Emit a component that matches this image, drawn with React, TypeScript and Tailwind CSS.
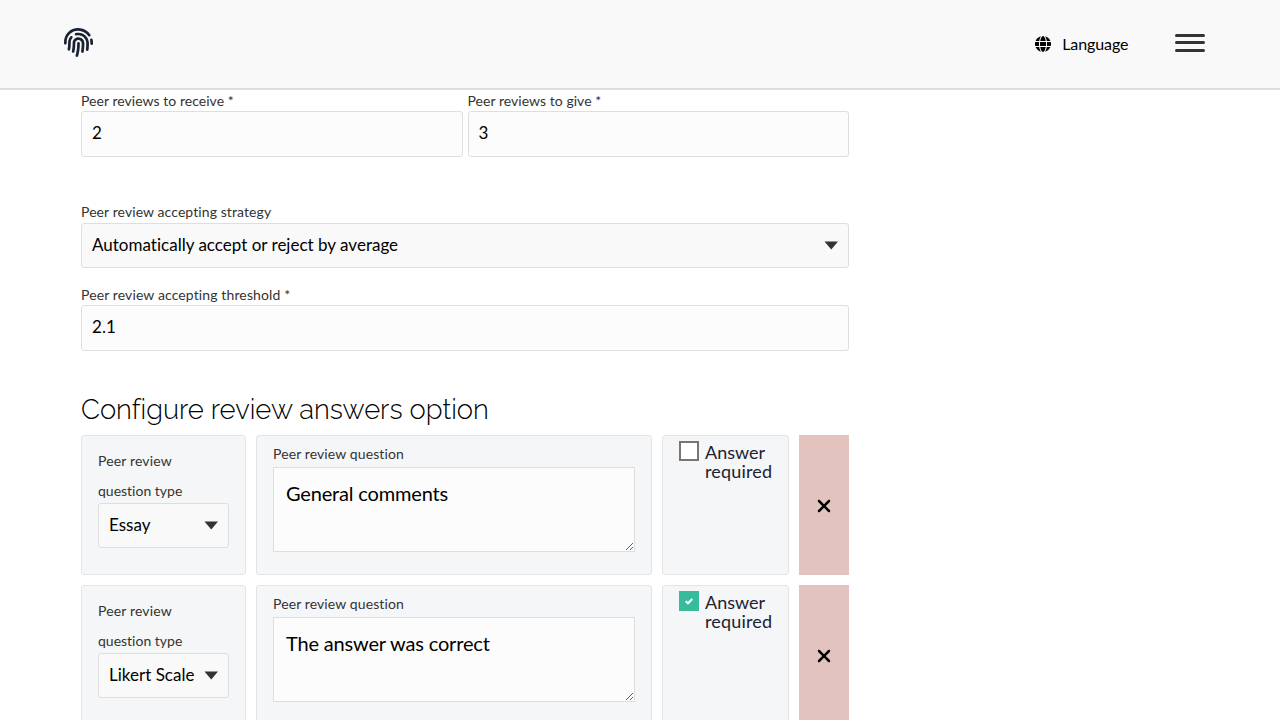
import { FaFingerprint } from "react-icons/fa";
import { FaGlobe, FaXmark } from "react-icons/fa6";

function Label({ children }: { children: string }) {
  return (
    <span className="block h-5 whitespace-nowrap text-sm leading-5 text-[#333]">
      {children}
    </span>
  );
}

function TextField({ label, value, className }: { label: string; value: string; className?: string }) {
  return (
    <label className={className}>
      <Label>{label}</Label>
      <input
        defaultValue={value}
        className="block h-[46px] w-full rounded-[3px] border border-[#dedede] bg-[#fcfcfc] px-2.5 pb-1 text-[17px] text-black outline-none"
      />
    </label>
  );
}

function Select({ value }: { value: string }) {
  return (
    <button className="flex h-[45px] w-full items-center justify-between rounded-[3px] border border-[#dedede] bg-[#f9f9f9] pr-2.5 pl-2.5 text-left text-[17px] whitespace-nowrap text-black">
      <span className="pb-0.5 tracking-[0.01px]">{value}</span>
      <svg width="14" height="9" viewBox="0 0 14 9" className="mb-px shrink-0">
        <path d="M0.5 0.5H14L7.25 8.5Z" fill="#333" />
      </svg>
    </button>
  );
}

function Question({ type, text, required }: { type: string; text: string; required: boolean }) {
  return (
    <div className="flex h-[140px] gap-2.5">
      <div className="w-[165px] shrink-0 rounded-[3px] border border-[#e2e4e6] bg-[#f5f6f7] px-4 pt-2.5">
        <div className="h-[57px] text-sm leading-[30px] text-[#333]">
          <span className="tracking-[0.15px]">Peer review</span>
          <br />
          question type
        </div>
        <Select value={type} />
      </div>
      <div className="w-[396px] shrink-0 rounded-[3px] border border-[#e2e4e6] bg-[#f5f6f7] px-4 pt-2">
        <div className="h-[23px] text-sm leading-5 tracking-[0.11px] text-[#333]">Peer review question</div>
        <textarea
          defaultValue={text}
          className="block h-[85px] w-full border border-[#dedede] bg-[#fcfcfc] px-3 py-2.5 text-xl leading-[30px] tracking-[-0.17px] text-black outline-none"
        />
      </div>
      <label className="flex w-[127px] shrink-0 gap-1.5 rounded-[3px] border border-[#e2e4e6] bg-[#f5f6f7] pt-[5px] pl-4">
        {required ? (
          <span className="mt-[0.4px] flex h-5 w-5 shrink-0 items-center justify-center bg-[#37bc9b]">
            <svg width="8" height="7" viewBox="0 0 8 7" fill="none" stroke="#fff" strokeWidth="2">
              <path d="M0.7 3.2L3 5.3L7.3 1" />
            </svg>
          </span>
        ) : (
          <span className="mt-[0.4px] h-5 w-5 shrink-0 border-2 border-[#767676] bg-white" />
        )}
        <span className="pt-0.5 text-lg leading-[19px] text-[#1a2333]">
          Answer
          <br />
          <span className="tracking-[0.17px]">required</span>
        </span>
      </label>
      <button className="flex w-[50px] shrink-0 items-center justify-center bg-[#e2c3be] text-black" aria-label="Delete">
        <FaXmark size={20} className="mt-0.5" />
      </button>
    </div>
  );
}

export default function App() {
  return (
    <div className="h-[720px] overflow-hidden bg-white font-['Lato',sans-serif] [font-variant-ligatures:none]">
      <header className="flex h-[90px] items-center justify-between border-b-2 border-[#dedede] bg-[#f9f9f9] pr-[75px] pb-1 pl-16">
        <FaFingerprint size={29} color="#1a2333" />
        <div className="flex items-center">
          <FaGlobe size={16} color="#000" className="mt-[3px]" />
          <span className="mt-1 ml-[11px] text-base tracking-[-0.07px] text-black">Language</span>
          <div className="mt-0.5 ml-[46.5px] flex w-[30px] flex-col">
            <span className="h-[3px] rounded-sm bg-[#333]" />
            <span className="mt-1 h-[3px] rounded-sm bg-[#333]" />
            <span className="mt-[5px] h-[3px] rounded-sm bg-[#333]" />
          </div>
        </div>
      </header>
      <main className="ml-[81px] flex w-[768px] flex-col pt-px">
        <div className="flex gap-[5px]">
          <TextField label="Peer reviews to receive *" value="2" className="flex-1 tracking-[0.04px]" />
          <TextField label="Peer reviews to give *" value="3" className="flex-1 tracking-[0.04px]" />
        </div>
        <div className="mt-[45px] tracking-[0.09px]">
          <div className="h-[21px]">
            <Label>Peer review accepting strategy</Label>
          </div>
          <Select value="Automatically accept or reject by average" />
        </div>
        <TextField label="Peer review accepting threshold *" value="2.1" className="mt-[17px] tracking-[0.12px]" />
        <h2 className="mt-[41px] mb-2 h-[35px] text-[27.4px] leading-[35px] font-light text-black font-['Raleway','Lato',sans-serif]">
          Configure review answers option
        </h2>
        <div className="flex flex-col gap-2.5">
          <Question type="Essay" text="General comments" required={false} />
          <Question type="Likert Scale" text="The answer was correct" required />
        </div>
      </main>
    </div>
  );
}
